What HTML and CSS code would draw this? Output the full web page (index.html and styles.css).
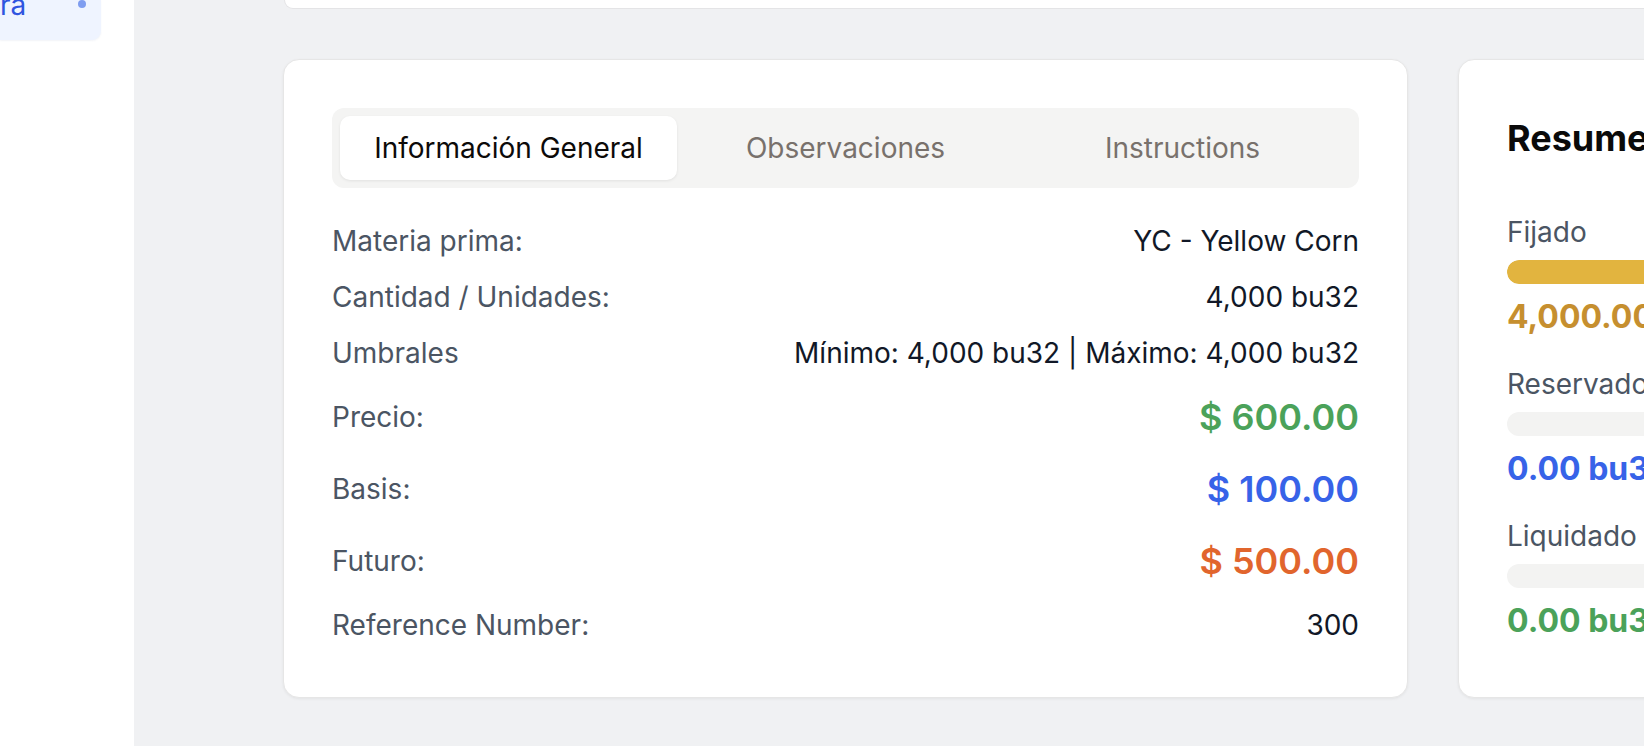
FILE: index.html
```html
<!DOCTYPE html>
<html lang="es">
<head>
<meta charset="utf-8">
<title>Contrato</title>
<link rel="stylesheet" href="styles.css">
</head>
<body>
<aside class="sidebar">
  <div class="nav-item">
    <span class="nav-text">ra</span>
    <span class="nav-dot"></span>
  </div>
</aside>
<main class="main">
  <div class="top-card"></div>
  <div class="cards">
    <section class="card detail-card">
      <div class="tabs">
        <button class="tab active">Información General</button>
        <button class="tab">Observaciones</button>
        <button class="tab">Instructions</button>
      </div>
      <div class="rows">
        <div class="row"><span class="label">Materia prima:</span><span class="value">YC - Yellow Corn</span></div>
        <div class="row"><span class="label">Cantidad / Unidades:</span><span class="value">4,000 bu32</span></div>
        <div class="row"><span class="label">Umbrales</span><span class="value">Mínimo: 4,000 bu32 | Máximo: 4,000 bu32</span></div>
        <div class="row big"><span class="label">Precio:</span><span class="value money green">$ 600.00</span></div>
        <div class="row big"><span class="label">Basis:</span><span class="value money blue">$ 100.00</span></div>
        <div class="row big"><span class="label">Futuro:</span><span class="value money orange">$ 500.00</span></div>
        <div class="row"><span class="label">Reference Number:</span><span class="value">300</span></div>
      </div>
    </section>
    <section class="card summary-card">
      <h2 class="summary-title">Resumen</h2>
      <div class="stats">
        <div class="stat">
          <div class="stat-label">Fijado</div>
          <div class="bar"><div class="bar-fill gold-fill" style="width:100%"></div></div>
          <div class="stat-value gold">4,000.00 bu32</div>
        </div>
        <div class="stat">
          <div class="stat-label">Reservado</div>
          <div class="bar"><div class="bar-fill" style="width:0%"></div></div>
          <div class="stat-value blue">0.00 bu32</div>
        </div>
        <div class="stat">
          <div class="stat-label">Liquidado</div>
          <div class="bar"><div class="bar-fill" style="width:0%"></div></div>
          <div class="stat-value green">0.00 bu32</div>
        </div>
      </div>
    </section>
  </div>
</main>
</body>
</html>
```

FILE: styles.css
```css
* { box-sizing: border-box; }

html, body {
  margin: 0;
  height: 100%;
}

body {
  display: flex;
  overflow: hidden;
  font-family: Inter, "Noto Sans", "Liberation Sans", sans-serif;
  background: #f0f1f3;
  color: #111827;
}

.sidebar {
  width: 134px;
  flex-shrink: 0;
  background: #ffffff;
}

.nav-item {
  width: 101px;
  height: 40px;
  display: flex;
  justify-content: space-between;
  align-items: flex-end;
  padding-bottom: 17px;
  padding-right: 15px;
  background: #eff4ff;
  border-radius: 0 0 9px 0;
  box-shadow: 0 1px 2px rgba(30, 60, 140, 0.06);
}

.nav-text {
  font-size: 28px;
  line-height: 36px;
  color: #2f55e0;
}

.nav-dot {
  align-self: flex-start;
  width: 8px;
  height: 8px;
  border-radius: 50%;
  background: #7f9df0;
}

.main {
  flex: 1;
  padding-left: 149px;
  min-width: 0;
}

.top-card {
  width: 1712px;
  height: 9px;
  background: #ffffff;
  border: 1px solid #e4e4e6;
  border-top: none;
  border-radius: 0 0 16px 16px;
  margin-left: 1px;
}

.cards {
  display: flex;
  gap: 50px;
  margin-top: 50px;
  align-items: stretch;
}

.card {
  flex-shrink: 0;
  background: #ffffff;
  border: 1px solid #e6e6e6;
  border-radius: 16px;
  box-shadow: 0 1px 3px rgba(0, 0, 0, 0.06);
  padding: 48px 48px 52px;
}

.detail-card {
  width: 1125px;
}

.summary-card {
  width: 537px;
}

.tabs {
  display: grid;
  grid-template-columns: repeat(3, 1fr);
  padding: 8px;
  height: 80px;
  background: #f4f4f3;
  border-radius: 12px;
}

.tab {
  border: none;
  background: transparent;
  font-family: inherit;
  font-size: 28px;
  color: #78716c;
  border-radius: 10px;
  padding: 0;
}

.tab.active {
  background: #ffffff;
  color: #0c0a09;
  box-shadow: 0 1px 3px rgba(0, 0, 0, 0.08);
}

.rows {
  display: flex;
  flex-direction: column;
  gap: 16px;
  margin-top: 33px;
}

.row {
  display: flex;
  justify-content: space-between;
  align-items: center;
  height: 40px;
  font-size: 28px;
  line-height: 40px;
}

.row.big {
  height: 56px;
}

.label {
  color: #4b5563;
}

.value {
  color: #111827;
}

.money {
  font-size: 36px;
  font-weight: 600;
}

.green { color: #4ba25a; }
.blue { color: #3763e8; }
.orange { color: #e1652d; }
.gold { color: #c68f2f; }

.summary-title {
  margin: 0;
  font-size: 36px;
  line-height: 60px;
  font-weight: 700;
  color: #0a0a0a;
  white-space: nowrap;
}

.stats {
  display: flex;
  flex-direction: column;
  gap: 27px;
  margin-top: 44px;
}

.stat-label {
  font-size: 28px;
  line-height: 40px;
  color: #4b5563;
  white-space: nowrap;
}

.bar {
  margin-top: 8px;
  height: 24px;
  border-radius: 12px;
  background: #f3f3f2;
  overflow: hidden;
}

.bar-fill {
  height: 100%;
  border-radius: 12px;
}

.gold-fill {
  background: #e2b43f;
}

.stat-value {
  margin-top: 13px;
  font-size: 32px;
  line-height: 40px;
  font-weight: 700;
  white-space: nowrap;
}
```
